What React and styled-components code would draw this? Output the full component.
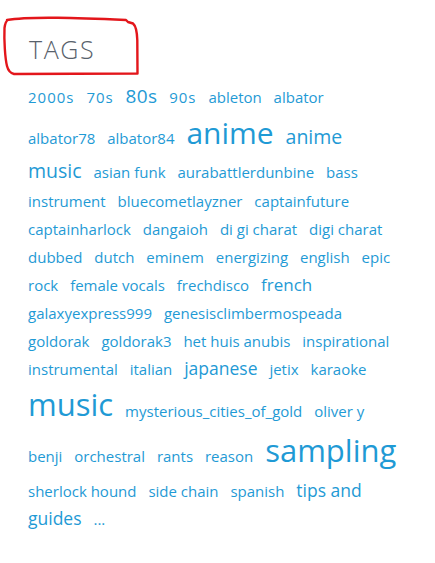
import React from "react";
import styled, { createGlobalStyle, css } from "styled-components";

const Global = createGlobalStyle`
  html, body { margin: 0; padding: 0; background: #ffffff; }
  body { font-family: "Open Sans", "Liberation Sans", sans-serif; }
`;

const Panel = styled.section`
  position: relative;
  padding: 34px 36px 40px 28px;
  background: #ffffff;
`;

const Heading = styled.h2`
  margin: 0 0 17px 1px;
  font-family: "Open Sans", "Liberation Sans", sans-serif;
  font-weight: 300;
  font-size: 25px;
  line-height: 30px;
  letter-spacing: 1.6px;
  color: #58616b;
  text-transform: uppercase;
`;

const Scribble = styled.svg`
  position: absolute;
  left: 0;
  top: 0;
  width: 150px;
  height: 80px;
  pointer-events: none;
  overflow: visible;
`;

const Cloud = styled.div`
  font-family: "Open Sans", "Liberation Sans", sans-serif;
  font-size: 15px;
  line-height: 28px;
  word-spacing: 8px;
  color: #1f9ad5;
`;

const Tag = styled.a`
  color: #1f9ad5;
  text-decoration: none;
  word-spacing: 0;
  font-size: ${(p) => p.$size}px;
  line-height: ${(p) => p.$lh}px;
  letter-spacing: ${(p) => p.$ls}px;
  cursor: pointer;
  ${(p) =>
    p.$block &&
    css`
      display: inline-block;
      margin-top: ${p.$mt}px;
      margin-bottom: ${p.$mb}px;
    `}
`;

const tags = [
  { name: "2000s", ls: 1 },
  { name: "70s", ls: 1 },
  { name: "80s", size: 19, lh: 31, ls: 0.3 },
  { name: "90s", ls: 1 },
  { name: "ableton" },
  { name: "albator" },
  { name: "albator78" },
  { name: "albator84" },
  { name: "anime", size: 30, lh: 41.5 },
  { name: "anime music", size: 19.5, lh: 33 },
  { name: "asian funk" },
  { name: "aurabattlerdunbine" },
  { name: "bass instrument" },
  { name: "bluecometlayzner" },
  { name: "captainfuture" },
  { name: "captainharlock" },
  { name: "dangaioh" },
  { name: "di gi charat" },
  { name: "digi charat" },
  { name: "dubbed" },
  { name: "dutch" },
  { name: "eminem" },
  { name: "energizing" },
  { name: "english" },
  { name: "epic rock" },
  { name: "female vocals" },
  { name: "frechdisco" },
  { name: "french", size: 17, lh: 26 },
  { name: "galaxyexpress999" },
  { name: "genesisclimbermospeada" },
  { name: "goldorak" },
  { name: "goldorak3" },
  { name: "het huis anubis" },
  { name: "inspirational" },
  { name: "instrumental" },
  { name: "italian" },
  { name: "japanese", size: 17.5, lh: 26 },
  { name: "jetix" },
  { name: "karaoke" },
  { name: "music", size: 31, lh: 31, block: true, mt: 6.5, mb: 0 },
  { name: "mysterious_cities_of_gold" },
  { name: "oliver y benji" },
  { name: "orchestral" },
  { name: "rants" },
  { name: "reason" },
  { name: "sampling", size: 31, lh: 31, block: true, mt: 10.8, mb: 11.2 },
  { name: "sherlock hound" },
  { name: "side chain" },
  { name: "spanish" },
  { name: "tips and guides", size: 17.5, lh: 26 },
  { name: "..." },
];

export default function App() {
  return (
    <>
      <Global />
      <Panel>
        <Scribble viewBox="0 0 150 80">
          <path
            d="M7 20 C 30 16, 80 18, 126 20 L 128 22 L 133 23.5 C 136 26, 137 32, 137.3 40 L 137.5 73.5 L 14 74 C 10 73, 8 70, 7 66 C 5 58, 4 40, 4.5 28 C 5 24, 6 21, 8 20"
            fill="none"
            stroke="#e3161b"
            strokeWidth="2.4"
            strokeLinejoin="round"
            strokeLinecap="round"
          />
        </Scribble>
        <Heading>Tags</Heading>
        <Cloud>
          {tags.map((t, i) => (
            <React.Fragment key={t.name + i}>
              <Tag
                $size={t.size || 15}
                $lh={t.lh || 28}
                $ls={t.ls || 0}
                $block={t.block}
                $mt={t.mt || 0}
                $mb={t.mb || 0}
              >
                {t.name}
              </Tag>{" "}
            </React.Fragment>
          ))}
        </Cloud>
      </Panel>
    </>
  );
}
